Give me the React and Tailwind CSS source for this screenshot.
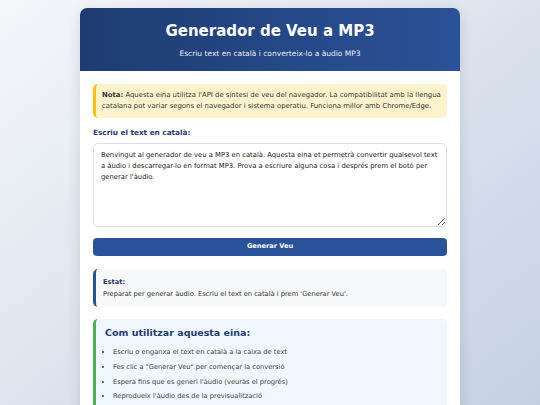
import React, { useState } from 'react';

const steps = [
  'Escriu o enganxa el text en català a la caixa de text',
  'Fes clic a "Generar Veu" per començar la conversió',
  "Espera fins que es generi l'àudio (veuràs el progrés)",
  "Reprodueix l'àudio des de la previsualització",
  "Descarrega el fitxer MP3 amb el botó de descàrrega",
];

const App = () => {
  const [text, setText] = useState(
    "Benvingut al generador de veu a MP3 en català. Aquesta eina et permetrà convertir qualsevol text a àudio i descarregar-lo en format MP3. Prova a escriure alguna cosa i després prem el botó per generar l'àudio."
  );

  return (
    <div
      className="min-h-screen w-full bg-gradient-to-br from-[#f5f7fa] to-[#c3cfe2] pt-[8px]"
      style={{ fontFamily: '"DejaVu Sans", Verdana, sans-serif' }}
    >
      <div className="mx-auto w-[380px] overflow-hidden rounded-[7px] bg-white shadow-[0_4px_14px_rgba(0,0,0,0.12)]">
        {/* Header */}
        <div className="flex h-[63px] flex-col items-center justify-center bg-gradient-to-r from-[#1e3c72] to-[#2a5298] text-white">
          <h1 className="text-[15px] font-bold leading-[20px]">Generador de Veu a MP3</h1>
          <p className="mt-[8px] text-[7.5px] leading-[10px] opacity-90">Escriu text en català i converteix-lo a àudio MP3</p>
        </div>

        <div className="px-[13px] pt-[13px] pb-[13px]">
          {/* Note */}
          <div className="rounded-[5px] border-l-[3px] border-[#ffc107] bg-[#fff3cd] py-[6px] pl-[6px] pr-[4px] text-[6.9px] leading-[11px] text-[#333]">
            <strong>Nota:</strong> Aquesta eina utilitza l'API de síntesi de veu del navegador. La compatibilitat amb la llengua catalana pot variar segons el navegador i sistema operatiu. Funciona millor amb Chrome/Edge.
          </div>

          <label className="mt-[10px] block text-[7.3px] font-bold leading-[10px] text-[#1e3c72]">Escriu el text en català:</label>
          <textarea
            value={text}
            onChange={(e) => setText(e.target.value)}
            className="mt-[5px] block h-[84px] w-full resize-y rounded-[5px] border border-[#dde1e7] px-[7px] py-[6px] text-[6.8px] leading-[11px] text-[#222] outline-none"
            style={{ fontFamily: '"DejaVu Sans", Verdana, sans-serif' }}
          />

          <button className="mt-[11px] block h-[18px] w-full rounded-[4px] bg-[#2a5298] text-[6.6px] font-bold text-white">
            Generar Veu
          </button>

          {/* Status */}
          <div className="mt-[13px] rounded-[5px] border-l-[3px] border-[#2a5298] bg-[#f8f9fa] px-[7px] py-[7px] text-[6.7px] leading-[12px] text-[#333]">
            <strong className="text-[#1e3c72]">Estat:</strong>
            <div>Preparat per generar àudio. Escriu el text en català i prem 'Generar Veu'.</div>
          </div>

          {/* How to */}
          <div className="mt-[12px] rounded-[5px] border-l-[3px] border-[#4caf50] bg-[#f0f7ff] px-[9px] pt-[7px] pb-[8px]">
            <h3 className="text-[9.5px] font-bold leading-[14px] text-[#1e3c72]">Com utilitzar aquesta eina:</h3>
            <ul className="mt-[5px] list-disc pl-[8px] text-[6.7px] leading-[10px] text-[#444]">
              {steps.map((s) => (
                <li key={s} className="py-[2.35px]">{s}</li>
              ))}
            </ul>
          </div>
        </div>
      </div>
    </div>
  );
};

export default App;
